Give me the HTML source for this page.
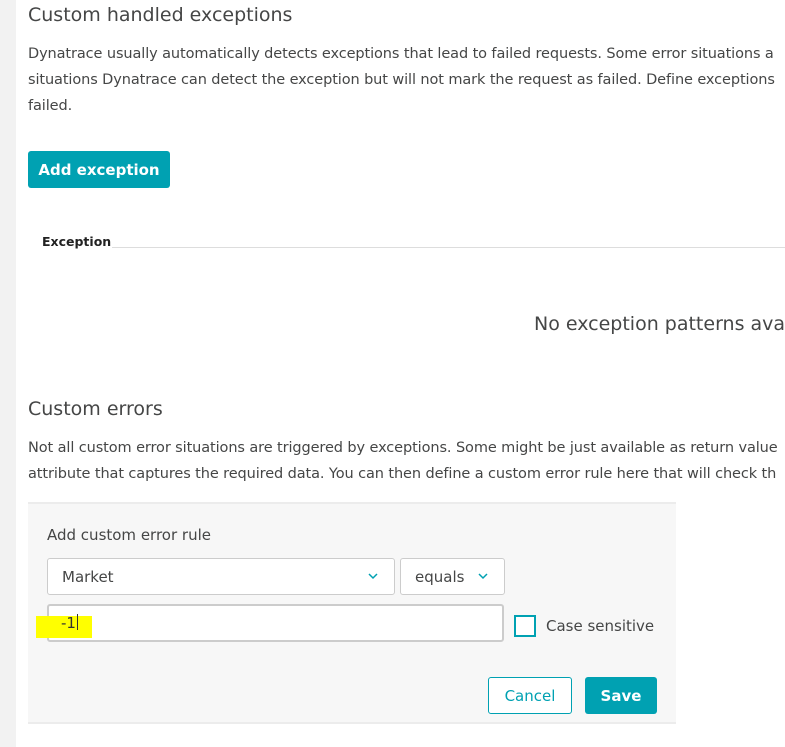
<!DOCTYPE html>
<html><head><meta charset="utf-8"><style>
*{box-sizing:border-box;margin:0;padding:0}
html,body{width:785px;height:747px;overflow:hidden;background:#fff;font-family:"DejaVu Sans","Liberation Sans",sans-serif;color:#454646}
.strip{position:absolute;left:0;top:0;width:16px;height:747px;background:#f2f2f2}
.a{position:absolute;white-space:nowrap}
h2{font-weight:normal;font-size:19px;color:#454646}
p.t{font-size:14.5px;line-height:26px;color:#454646;letter-spacing:-0.1px}
.btn{background:#00a1b2;color:#fff;border-radius:3px;font-size:15px;font-weight:600;display:flex;align-items:center;justify-content:center}
.box{position:absolute;background:#fff;border:1px solid #ccc;border-radius:3px;font-size:15px;display:flex;align-items:center;padding-left:14px}
</style></head><body>
<div class="strip"></div>
<h2 class="a" style="left:28px;top:4px">Custom handled exceptions</h2>
<p class="t a" style="left:28px;top:41px">Dynatrace usually automatically detects exceptions that lead to failed requests. Some error situations a<br>situations Dynatrace can detect the exception but will not mark the request as failed. Define exceptions<br>failed.</p>
<div class="btn a" style="left:28px;top:151px;width:142px;height:37px">Add exception</div>
<div class="a" style="left:42px;top:234px;font-size:12.5px;font-weight:bold;color:#222">Exception</div>
<div class="a" style="left:112px;top:247px;width:673px;height:1px;background:#ddd"></div>
<div class="a" style="left:534px;top:313px;font-size:19px;color:#454646">No exception patterns avai</div>
<h2 class="a" style="left:28px;top:398px">Custom errors</h2>
<p class="t a" style="left:28px;top:435px">Not all custom error situations are triggered by exceptions. Some might be just available as return value<br>attribute that captures the required data. You can then define a custom error rule here that will check th</p>
<div class="a" style="left:28px;top:502px;width:648px;height:222px;background:#f7f7f7;border-top:2px solid #ececec;border-bottom:2px solid #ececec"></div>
<div class="a" style="left:47px;top:526px;font-size:15px">Add custom error rule</div>
<div class="box" style="left:47px;top:558px;width:348px;height:37px">Market
<svg style="position:absolute;right:16px;top:14px" width="10" height="7"><path d="M1 1l4 4 4-4" stroke="#00a1b2" stroke-width="1.5" fill="none"/></svg></div>
<div class="box" style="left:400px;top:558px;width:105px;height:37px">equals
<svg style="position:absolute;right:16px;top:14px" width="10" height="7"><path d="M1 1l4 4 4-4" stroke="#00a1b2" stroke-width="1.5" fill="none"/></svg></div>
<div class="box" style="left:47px;top:604px;width:457px;height:38px;border:2px solid #ccc;padding-left:13px"></div>
<div class="a" style="left:36px;top:616px;width:56px;height:22px;background:#ffff00"></div>
<div class="a" style="left:61px;top:614px;font-size:15px;color:#333">-1<span style="display:inline-block;width:1px;height:16px;background:#333;margin-left:1px;vertical-align:-2px"></span></div>
<div class="a" style="left:514px;top:615px;width:22px;height:22px;border:2px solid #00a1b2;background:#fff"></div>
<div class="a" style="left:546px;top:617px;font-size:15px">Case sensitive</div>
<div class="a" style="left:488px;top:677px;width:84px;height:37px;border:1px solid #00a1b2;border-radius:3px;color:#00a1b2;font-size:15px;display:flex;align-items:center;justify-content:center;background:#fff">Cancel</div>
<div class="btn a" style="left:585px;top:677px;width:72px;height:37px">Save</div>
</body></html>
